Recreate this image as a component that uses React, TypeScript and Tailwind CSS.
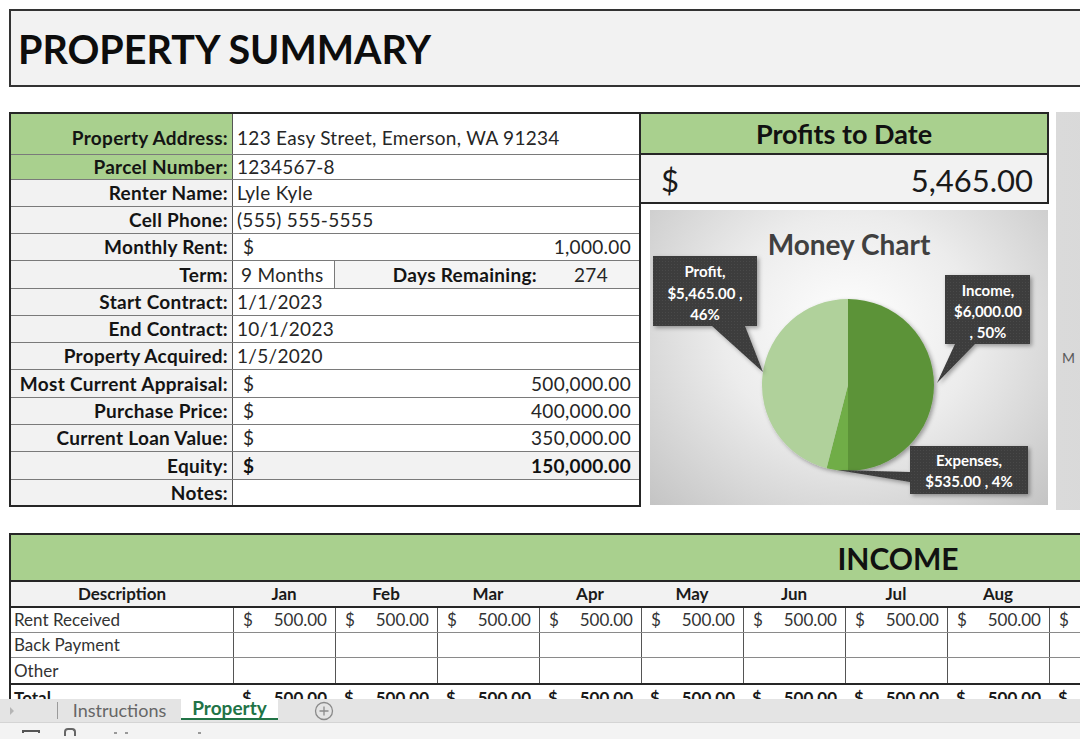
import React from 'react';

type Row = {
  label: string;
  h: string;
  value?: string;
  money?: string;
  green?: boolean;
  tall?: boolean;
  bold?: boolean;
  shaded?: boolean;
  term?: boolean;
};

// heights follow the sheet's row heights
const rows: Row[] = [
  { label: 'Property Address:', h: 'h-[41px]', value: '123 Easy Street, Emerson, WA 91234', green: true, tall: true },
  { label: 'Parcel Number:', h: 'h-[25px]', value: '1234567-8', green: true },
  { label: 'Renter Name:', h: 'h-[27px]', value: 'Lyle Kyle' },
  { label: 'Cell Phone:', h: 'h-[27px]', value: '(555) 555-5555' },
  { label: 'Monthly Rent:', h: 'h-[27px]', money: '1,000.00' },
  { label: 'Term:', h: 'h-[28px]', term: true },
  { label: 'Start Contract:', h: 'h-[27px]', value: '1/1/2023' },
  { label: 'End Contract:', h: 'h-[27px]', value: '10/1/2023' },
  { label: 'Property Acquired:', h: 'h-[27px]', value: '1/5/2020' },
  { label: 'Most Current Appraisal:', h: 'h-[28px]', money: '500,000.00' },
  { label: 'Purchase Price:', h: 'h-[27px]', money: '400,000.00' },
  { label: 'Current Loan Value:', h: 'h-[27px]', money: '350,000.00' },
  { label: 'Equity:', h: 'h-[28px]', money: '150,000.00', bold: true, shaded: true },
  { label: 'Notes:', h: 'h-[25px]' },
];

const months = ['Jan', 'Feb', 'Mar', 'Apr', 'May', 'Jun', 'Jul', 'Aug', 'Sep'];

const incomeRows = [
  { name: 'Rent Received', values: true },
  { name: 'Back Payment', values: false },
  { name: 'Other', values: false },
];

function DetailsTable() {
  return (
    <div className="w-[632px] border-2 border-[#262626] shrink-0 text-[19px] leading-[22px] tracking-[0.3px]">
      {rows.map((r, i) => {
        const last = i === rows.length - 1;
        return (
          <div key={r.label} className={`flex overflow-hidden ${r.h} ${last ? '' : 'border-b border-[#7a7a7a]'}`}>
            <div
              className={`w-[222px] shrink-0 flex justify-end pr-[4px] border-r border-[#555] font-bold text-[#141414] ${
                r.tall ? 'items-end pb-[5px]' : 'items-center'
              } ${r.green ? 'bg-[#a9d08e]' : 'bg-[#f2f2f2]'}`}
            >
              {r.label}
            </div>
            {r.term ? (
              <div className="flex-1 flex text-[#262626]">
                <div className="w-[102px] border-r border-[#7a7a7a] flex items-center pl-[8px]">9 Months</div>
                <div className="flex-1 bg-[#f4f4f4] flex items-center">
                  <span className="w-[202px] text-right font-bold text-[#141414]">Days Remaining:</span>
                  <span className="flex-1 text-center pl-[6px]">274</span>
                </div>
              </div>
            ) : r.money ? (
              <div
                className={`flex-1 flex items-center justify-between pl-[10px] pr-[8px] ${
                  r.shaded ? 'bg-[#f2f2f2]' : 'bg-white'
                } ${r.bold ? 'font-bold text-[#111]' : 'text-[#262626]'}`}
              >
                <span>$</span>
                <span>{r.money}</span>
              </div>
            ) : (
              <div
                className={`flex-1 flex pl-[4px] text-[#262626] bg-white ${r.tall ? 'items-end pb-[5px]' : 'items-center'}`}
              >
                {r.value}
              </div>
            )}
          </div>
        );
      })}
    </div>
  );
}

function MoneyChart() {
  const cx = 198;
  const cy = 175;
  const r = 86;
  return (
    <div className="mt-[6px] ml-[9px] w-[398px] h-[295px] bg-[radial-gradient(ellipse_at_50%_40%,#ffffff_0%,#ececec_45%,#c4c4c4_100%)]">
      <svg width="398" height="295" viewBox="0 0 398 295">
        <defs>
          <pattern id="dots" width="3" height="3" patternUnits="userSpaceOnUse">
            <rect width="3" height="3" fill="#3d3d3d" />
            <rect width="1" height="1" fill="#4a4a4a" />
          </pattern>
          <filter id="sh" x="-20%" y="-20%" width="140%" height="140%">
            <feDropShadow dx="2" dy="2" stdDeviation="2" floodColor="#000" floodOpacity="0.35" />
          </filter>
        </defs>
        <text x="199" y="45" textAnchor="middle" fontSize="28" fontWeight="700" fill="#404040" fontFamily="Lato, sans-serif">
          Money Chart
        </text>
        <g filter="url(#sh)">
          <path d={`M${cx},${cy} L${cx},${cy - r} A${r},${r} 0 0 1 ${cx},${cy + r} Z`} fill="#5c9339" />
          <path d={`M${cx},${cy} L${cx},${cy + r} A${r},${r} 0 0 1 176.6,258.3 Z`} fill="#70ad47" />
          <path d={`M${cx},${cy} L176.6,258.3 A${r},${r} 0 0 1 ${cx},${cy - r} Z`} fill="#b0d19b" />
        </g>
        <g filter="url(#sh)" fill="url(#dots)">
          <polygon points="3,46 107,46 107,116 95,116 113,162 62,116 3,116" />
          <polygon points="295,65 380,65 380,134 325,134 287,173 305,134 295,134" />
          <polygon points="260,236 378,236 378,284 260,284 260,272 187,260 260,262" />
        </g>
        <g fill="#ffffff" fontFamily="Lato, sans-serif" fontWeight="700" fontSize="15" textAnchor="middle">
          <text x="55" y="67">Profit,</text>
          <text x="55" y="89">$5,465.00 ,</text>
          <text x="55" y="110">46%</text>
          <text x="338" y="86">Income,</text>
          <text x="338" y="107">$6,000.00</text>
          <text x="338" y="128">, 50%</text>
          <text x="319" y="256">Expenses,</text>
          <text x="319" y="277">$535.00 , 4%</text>
        </g>
      </svg>
    </div>
  );
}

function RightPanel() {
  return (
    <div className="w-[408px] shrink-0">
      <div className="border-2 border-l-0 border-[#262626]">
        <div className="h-[41px] bg-[#a9d08e] border-b-2 border-[#262626] flex items-center justify-center pt-[2px] text-[27px] font-bold text-[#111]">
          Profits to Date
        </div>
        <div className="h-[47px] bg-[#f2f2f2] flex items-center justify-between pl-[20px] pr-[14px] pt-[3px] text-[31px] text-[#1a1a1a]">
          <span>$</span>
          <span>5,465.00</span>
        </div>
      </div>
      <MoneyChart />
    </div>
  );
}

function Income() {
  return (
    <div className="mt-[23px] border-l-2 border-t-2 border-[#262626] leading-[20px]">
      <div className="h-[47px] w-[1774px] bg-[#a9d08e] border-b-2 border-[#262626] flex items-center justify-center text-[30px] font-bold text-[#111]">
        INCOME
      </div>
      <div className="h-[26px] bg-[#f2f2f2] border-b-2 border-[#262626] flex items-center text-[17px] font-bold text-[#1a1a1a]">
        <div className="w-[222px] text-center">Description</div>
        {months.map((m) => (
          <div key={m} className="w-[102px] text-center">
            {m}
          </div>
        ))}
      </div>
      {incomeRows.map((row, i) => {
        const last = i === incomeRows.length - 1;
        return (
          <div
            key={row.name}
            className={`flex text-[17px] text-[#333] ${
              last ? 'h-[27px] border-b-2 border-[#262626]' : 'h-[25px] border-b border-[#8a8a8a]'
            }`}
          >
            <div className="w-[222px] flex items-center pl-[3px]">{row.name}</div>
            {months.map((m) => (
              <div key={m} className="w-[102px] border-l border-[#555] flex items-center justify-between pl-[9px] pr-[8px]">
                {row.values && (
                  <>
                    <span>$</span>
                    <span>500.00</span>
                  </>
                )}
              </div>
            ))}
          </div>
        );
      })}
      <div className="h-[25px] flex text-[17px] font-bold text-[#1a1a1a]">
        <div className="w-[222px] flex items-center pl-[3px]">Total</div>
        {months.map((m) => (
          <div key={m} className="w-[102px] flex items-center justify-between pl-[9px] pr-[8px]">
            <span>$</span>
            <span>500.00</span>
          </div>
        ))}
      </div>
    </div>
  );
}

function TabBar() {
  return (
    <div className="h-[23px] bg-[#e4e4e4] flex items-stretch text-[18px] shrink-0">
      <div className="w-[57px] flex items-center pl-[8px]">
        <svg width="8" height="10" viewBox="0 0 8 10">
          <path d="M2 1 L6 5 L2 9 Z" fill="#b5b5b5" />
        </svg>
      </div>
      <div className="w-px my-[3px] bg-[#9a9a9a]" />
      <div className="w-[123px] flex items-center justify-center text-[#666]">Instructions</div>
      <div className="w-[97px] h-[21px] bg-white border-b-2 border-[#217346] flex items-center justify-center font-bold text-[19px] text-[#217346]">
        Property
      </div>
      <div className="flex items-center pl-[36px]">
        <svg width="20" height="20" viewBox="0 0 20 20">
          <circle cx="10" cy="10" r="8.5" fill="none" stroke="#8a8a8a" strokeWidth="1.3" />
          <path d="M10 5.5 V14.5 M5.5 10 H14.5" stroke="#8a8a8a" strokeWidth="1.3" />
        </svg>
      </div>
    </div>
  );
}

function StatusBar() {
  return (
    <div className="h-[17px] bg-[#f3f3f3] border-t border-[#d4d4d4] flex items-start shrink-0 overflow-hidden">
      <div className="ml-[22px] mt-[7px] w-[18px] h-[3px] border-t-2 border-x-2 border-[#555]" />
      <div className="ml-[24px] mt-[5px] w-[12px] h-[8px] border-t-2 border-x-2 border-[#666] rounded-t-sm" />
      <div className="ml-[38px] mt-[9px] w-[3px] h-[2px] bg-[#999]" />
      <div className="ml-[8px] mt-[9px] w-[3px] h-[2px] bg-[#999]" />
      <div className="ml-[70px] mt-[9px] w-[3px] h-[2px] bg-[#999]" />
    </div>
  );
}

export default function App() {
  return (
    <div className="h-[739px] w-[1080px] overflow-hidden flex flex-col bg-white font-['Lato',sans-serif] text-black">
      <div className="flex-1 overflow-hidden">
        <div className="w-[1800px] pl-[9px] pt-[9px]">
          <div className="h-[78px] border-2 border-[#333] bg-[#f2f2f2] flex items-center pl-[7px] pt-[2px]">
            <h1 className="text-[39.5px] font-bold text-[#0d0d0d]">PROPERTY SUMMARY</h1>
          </div>
          <div className="mt-[25px] flex items-start">
            <DetailsTable />
            <RightPanel />
            <div className="ml-[7px] w-[300px] h-[398px] bg-[linear-gradient(90deg,#dadada,#d2d2d2)] pl-[6px] pt-[235px] text-[14px] text-[#595959]">
              M
            </div>
          </div>
          <Income />
        </div>
      </div>
      <TabBar />
      <StatusBar />
    </div>
  );
}
